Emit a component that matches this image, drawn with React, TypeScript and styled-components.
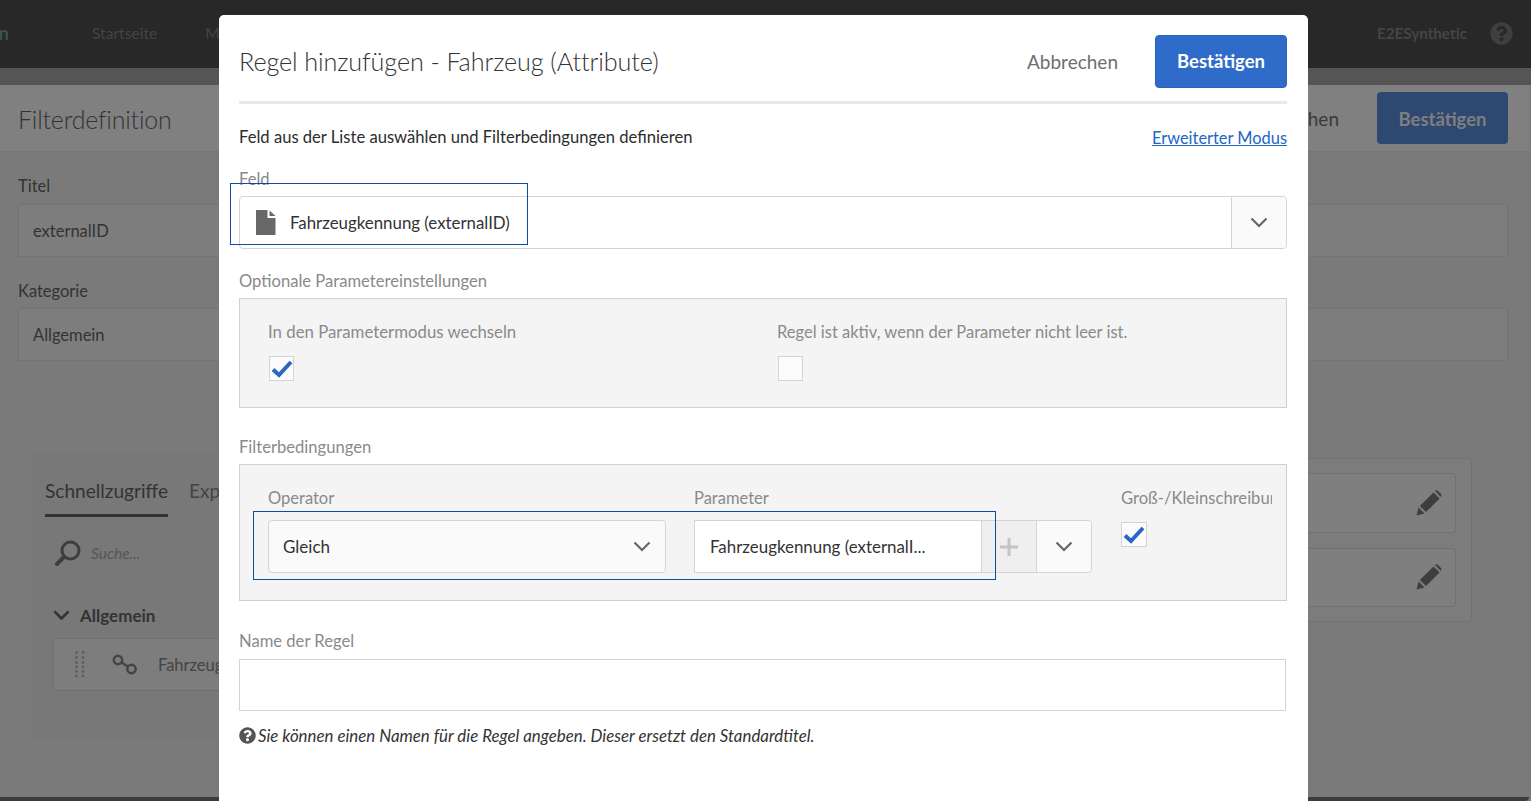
import React from "react";
import styled, { createGlobalStyle } from "styled-components";
import { FaQuestionCircle } from "react-icons/fa";

const Global = createGlobalStyle`
  html, body { margin: 0; padding: 0; height: 801px; overflow: hidden; background: #7a7a7a; }
  body { font-family: Lato, "Open Sans", sans-serif; font-size: 17px; color: #2c2c2c; }
  * { box-sizing: border-box; }
`;

const Page = styled.div`
  position: relative; height: 801px; overflow: hidden; display: flex; flex-direction: column; background: #7a7a7a;
`;
const TopBar = styled.header`
  height: 68px; background: #282828; display: flex; align-items: center; color: #444; padding-right: 18px; flex: none; padding-bottom: 2px;
`;
const Brand = styled.div`
  width: 9px; overflow: hidden; display: flex; justify-content: flex-end; font-weight: 700; color: #3a544c; font-size: 18px;
`;
const NavLink = styled.span`
  font-size: 15.6px; color: #444; margin-right: 48px; &:first-of-type { margin-left: 83px; }
`;
const Spacer = styled.div`flex: 1;`;
const UserName = styled.span`font-weight: 700; font-size: 15.2px; color: #454545; margin-right: 23px;`;
const Band = styled.div`height: 17px; background: #555; flex: none;`;
const Sheet = styled.main`
  flex: 1; margin-right: 2px; border-radius: 0 4px 4px 0; background: #7a7a7a; display: flex; flex-direction: column; min-height: 0;
  border-bottom: 4px solid #3c3c3c;
`;
const SheetHeader = styled.div`
  height: 67px; background: #808080; border-bottom: 1px solid #767676; display: flex; align-items: center; padding: 0 21px 0 18px; flex: none;
`;
const SheetTitle = styled.h1`margin: 0; padding-top: 1px; font-weight: 300; font-size: 25px; color: #333; letter-spacing: -.2px;`;
const SheetCancel = styled.span`font-size: 19px; color: #3a3a3a; margin-right: 38px;`;
const SheetConfirm = styled.div`
  width: 131px; height: 52px; padding-top: 1px; background: #2d4871; border-radius: 4px; color: #7f7f7f; font-weight: 700; font-size: 18.5px;
  display: flex; align-items: center; justify-content: center;
`;
const SheetForm = styled.div`padding: 22px 21px 0 18px; display: flex; flex-direction: column;`;
const SheetLabel = styled.div<{ $shift?: number }>`
  font-size: 16.5px; color: #333; height: 24px; line-height: 24px;
  margin: ${(p) => p.$shift ?? 0}px 0 ${(p) => -(p.$shift ?? 0)}px;
`;
const SheetField = styled.div`
  height: 53px; margin: 6px 0 21px; border: 1px solid #737373; background: #7d7d7d; display: flex; align-items: center; padding-left: 14px; color: #333; font-size: 16.5px;
`;
const Lower = styled.div`
  display: flex; align-items: flex-start; gap: 40px; padding: 22px 57px 0 14px; border-top: 1px solid #767676; margin: 48px 0 0 18px;
`;
const Palette = styled.section`
  width: 620px; height: 288px; background: #787878; padding: 0 13px;
`;
const Tabs = styled.div`display: flex; gap: 21px; height: 65px; padding-top: 23px; font-size: 19.1px; color: #333;`;
const Tab = styled.div<{ $active?: boolean }>`
  height: 41px; line-height: 30px; ${(p) => p.$active ? "border-bottom: 3px solid #333;" : "color: #444;"}
`;
const SearchRow = styled.div`
  display: flex; align-items: center; gap: 10px; height: 70px; margin: 0 -13px; padding-left: 23px; border-bottom: 1px solid #757575; color: #555; font-style: italic; font-size: 15.5px;
`;
const GroupHead = styled.div`display: flex; align-items: center; gap: 10px; margin: 13px 0 9px 8px; font-weight: 700; font-size: 17px; color: #333; height: 28px;`;
const PaletteItem = styled.div`
  margin-left: 8px; height: 53px; border: 1px solid #6f6f6f; border-radius: 4px; display: flex; align-items: center; padding-left: 21px; gap: 27px; background: #7d7d7d; color: #444; font-size: 16.5px;
`;
const PaletteItemName = styled.span`margin-left: -7px;`;
const Results = styled.section`
  flex: 1; height: 164px; margin-top: 5px; border: 1px solid #727272; border-radius: 4px; background: #7c7c7c; padding: 14px 15px 14px 20px; display: flex; flex-direction: column; gap: 15px;
`;
const ResultCard = styled.div`
  height: 60px; border: 1px solid #707070; border-radius: 4px; display: flex; align-items: center; justify-content: flex-end; padding-right: 13px; background: #7f7f7f;
`;

const Dialog = styled.div`
  position: absolute; left: 219px; top: 15px; width: 1089px; height: 800px; background: #fff; border-radius: 5px; padding: 20px 21px 0 20px;
`;
const DialogHeader = styled.div`
  display: flex; align-items: center; height: 69px; padding: 1px 0 15px; border-bottom: 3px solid #e8e8e8;
`;
const DialogTitle = styled.h2`margin: 0; font-weight: 300; font-size: 25.2px; color: #333; flex: 1; letter-spacing: -.1px;`;
const CancelButton = styled.span`font-size: 19px; color: #6e6e6e; margin-right: 37px;`;
const ConfirmButton = styled.div`
  width: 132px; height: 53px; background: #2f6bc9; border: 1px solid #2a62b8; border-radius: 4px; color: #fff; font-weight: 700; font-size: 18.5px;
  display: flex; align-items: center; justify-content: center;
`;
const IntroRow = styled.div`display: flex; justify-content: space-between; align-items: center; height: 24px; margin: 21px 0 19px; font-size: 16.6px; color: #2c2c2c;`;
const AdvancedLink = styled.a`color: #2166c5; text-decoration: underline; font-size: 16.4px;`;
const SectionLabel = styled.div`font-size: 16.6px; color: #8a8a8a; height: 22px; line-height: 22px;`;
const FieldPicker = styled.div`
  height: 53px; border: 1.5px solid #d4d4d4; border-radius: 4px; display: flex; align-items: center; overflow: hidden; margin-top: 6px; margin-bottom: 21px; background: #fff;
`;
const FieldValue = styled.div`flex: 1; display: flex; align-items: center; gap: 14px; padding-left: 16px; font-size: 16.85px; color: #333;`;
const ArrowCell = styled.div<{ $w: number }>`
  width: ${(p) => p.$w}px; align-self: stretch; background: #fafafa; border-left: 1.5px solid #d4d4d4; display: flex; align-items: center; justify-content: center; flex: none;
`;
const OptionsBox = styled.div`
  height: 110px; margin-top: 6px; background: #f4f4f4; border: 1.5px solid #d0d0d0; padding: 22px 0 0 28px; display: grid; grid-template-columns: 509px 1fr; margin-bottom: 28px;
`;
const OptionCol = styled.div`display: flex; flex-direction: column; align-items: flex-start; color: #8a8a8a;`;
const OptionLabel = styled.div<{ $fs: number }>`height: 22px; line-height: 22px; margin-bottom: 13px; font-size: ${(p) => p.$fs}px;`;
const Check = styled.div<{ $size?: number; $ml?: number }>`
  width: ${(p) => p.$size ?? 25}px; height: 25px; border: 1.5px solid #d4d4d4; background: #fbfbfb; display: flex; align-items: center; justify-content: center; margin-left: ${(p) => p.$ml ?? 1}px; flex: none;
`;
const ConditionBox = styled.div`
  height: 137px; margin-top: 6px; background: #f4f4f4; border: 1.5px solid #d0d0d0; padding: 22px 14px 0 28px; display: flex; margin-bottom: 29px;
`;
const OpCol = styled.div`width: 398px; flex: none; margin-right: 28px;`;
const ParamCol = styled.div`width: 398px; flex: none; margin-right: 29px;`;
const SmallLabel = styled.div`height: 22px; line-height: 22px; font-size: 16.5px; color: #8a8a8a; margin-bottom: 11px;`;
const OperatorSelect = styled.div`
  height: 53px; background: #fafafa; border: 1.5px solid #d4d4d4; border-radius: 4px; display: flex; align-items: center; justify-content: space-between; padding: 0 14px 0 14px; color: #333; font-size: 17px;
`;
const ParamGroup = styled.div`height: 53px; display: flex; border: 1.5px solid #d4d4d4; border-radius: 0 4px 4px 0; overflow: hidden;`;
const ParamInput = styled.div`
  width: 287px; flex: none; background: #fff; border-right: 1.5px solid #d4d4d4; display: flex; align-items: center; padding-left: 15px; color: #333; font-size: 16.9px; white-space: nowrap;
`;
const PlusCell = styled.div`width: 54px; background: #efefef; display: flex; align-items: center; justify-content: center; flex: none;`;
const CaseCol = styled.div`flex: 1; min-width: 0; overflow: hidden; font-size: 16.6px; color: #8a8a8a; white-space: nowrap;`;
const CaseLabel = styled.div`height: 22px; line-height: 22px; margin: 0 0 13px;`;
const NameInput = styled.div`height: 52px; width: 1047px; border: 1.5px solid #d4d4d4; margin-top: 7px; background: #fff;`;
const HelpRow = styled.div`display: flex; align-items: center; gap: 2px; margin-top: 13px; font-style: italic; font-size: 16.85px; color: #333; height: 22px;`;
const Marker = styled.div<{ $l: number; $t: number; $w: number; $h: number }>`
  position: absolute; left: ${(p) => p.$l}px; top: ${(p) => p.$t}px; width: ${(p) => p.$w}px; height: ${(p) => p.$h}px; border: 1px solid #0a4ba6; pointer-events: none;
`;

const Chevron = ({ size = 18, color = "#666", sw = 2.2 }: { size?: number; color?: string; sw?: number }) => (
  <svg width={size} height={size * 0.6} viewBox="0 0 18 10.8" fill="none"><path d="M1.5 1.5 L9 9 L16.5 1.5" stroke={color} strokeWidth={sw} /></svg>
);
const Tick = () => (
  <svg width="22" height="18" viewBox="0 0 22 18" fill="none"><path d="M2 9.5 L8 15 L20 2" stroke="#2b66c4" strokeWidth="4" /></svg>
);
const Pencil = () => (
  <svg width="26" height="26" viewBox="0 0 26 26" fill="#3e3e3e"><path d="M0.5 25.5 L2.5 17.5 L8.5 23.5 Z" /><path d="M3.8 16 L17.5 2.4 L23.6 8.5 L10 22.1 Z" /><path d="M19 1 L21 0 L25.5 4.5 L24.8 7 Z" /></svg>
);
const FileIcon = () => (
  <svg width="20" height="25" viewBox="0 0 20 25" fill="#686868"><path d="M0 0 H11.5 V8 H19.5 V25 H0 Z" /><path d="M13.5 0.5 L19.5 6 H13.5 Z" /></svg>
);
const SearchIcon = () => (
  <svg width="26" height="26" viewBox="0 0 26 26" fill="none" stroke="#3e3e3e"><circle cx="15.5" cy="10.5" r="8.5" strokeWidth="3" /><path d="M9 17 L2 24" strokeWidth="4" strokeLinecap="round" /></svg>
);
const GripIcon = () => (
  <svg width="10" height="27" viewBox="0 0 10 27" fill="#5f5f5f">
    {[1.5, 6.5, 11.5, 16, 20.5, 25].flatMap((y) => [1.5, 8].map((x) => <circle key={`${x}-${y}`} cx={x} cy={y} r="1.4" />))}
  </svg>
);
const LinkIcon = () => (
  <svg width="26" height="22" viewBox="0 0 26 22" fill="none" stroke="#444" strokeWidth="2.4"><circle cx="6" cy="6" r="4.2" /><circle cx="19.5" cy="15" r="4.2" /><path d="M9.5 8.5 L16 12.5" /></svg>
);

export default function App() {
  return (
    <Page>
      <Global />
      <TopBar>
        <Brand><span>Campaign</span></Brand>
        <NavLink>Startseite</NavLink>
        <NavLink>Marketing</NavLink>
        <Spacer />
        <UserName>E2ESynthetic</UserName>
        <FaQuestionCircle size={23} color="#3f3f3f" />
      </TopBar>
      <Band />
      <Sheet>
        <SheetHeader>
          <SheetTitle>Filterdefinition</SheetTitle>
          <Spacer />
          <SheetCancel>Abbrechen</SheetCancel>
          <SheetConfirm>Bestätigen</SheetConfirm>
        </SheetHeader>
        <SheetForm>
          <SheetLabel>Titel</SheetLabel>
          <SheetField>externalID</SheetField>
          <SheetLabel $shift={1}>Kategorie</SheetLabel>
          <SheetField>Allgemein</SheetField>
        </SheetForm>
        <Lower>
          <Palette>
            <Tabs>
              <Tab $active>Schnellzugriffe</Tab>
              <Tab>Experte</Tab>
            </Tabs>
            <SearchRow><SearchIcon /><span>Suche...</span></SearchRow>
            <GroupHead><Chevron size={17} color="#333" sw={2.8} />Allgemein</GroupHead>
            <PaletteItem><GripIcon /><LinkIcon /><PaletteItemName>Fahrzeugkennung</PaletteItemName></PaletteItem>
          </Palette>
          <Results>
            <ResultCard><Pencil /></ResultCard>
            <ResultCard><Pencil /></ResultCard>
          </Results>
        </Lower>
      </Sheet>

      <Dialog>
        <DialogHeader>
          <DialogTitle>Regel hinzufügen - Fahrzeug (Attribute)</DialogTitle>
          <CancelButton>Abbrechen</CancelButton>
          <ConfirmButton>Bestätigen</ConfirmButton>
        </DialogHeader>
        <IntroRow>
          <span>Feld aus der Liste auswählen und Filterbedingungen definieren</span>
          <AdvancedLink>Erweiterter Modus</AdvancedLink>
        </IntroRow>
        <SectionLabel>Feld</SectionLabel>
        <FieldPicker>
          <FieldValue><FileIcon />Fahrzeugkennung (externalID)</FieldValue>
          <ArrowCell $w={55}><Chevron /></ArrowCell>
        </FieldPicker>
        <SectionLabel>Optionale Parametereinstellungen</SectionLabel>
        <OptionsBox>
          <OptionCol>
            <OptionLabel $fs={16.8}>In den Parametermodus wechseln</OptionLabel>
            <Check><Tick /></Check>
          </OptionCol>
          <OptionCol>
            <OptionLabel $fs={16.5}>Regel ist aktiv, wenn der Parameter nicht leer ist.</OptionLabel>
            <Check />
          </OptionCol>
        </OptionsBox>
        <SectionLabel>Filterbedingungen</SectionLabel>
        <ConditionBox>
          <OpCol>
            <SmallLabel>Operator</SmallLabel>
            <OperatorSelect>Gleich<Chevron /></OperatorSelect>
          </OpCol>
          <ParamCol>
            <SmallLabel>Parameter</SmallLabel>
            <ParamGroup>
              <ParamInput>Fahrzeugkennung (externalI...</ParamInput>
              <PlusCell>
                <svg width="18" height="18" viewBox="0 0 18 18" fill="#c4c4c4"><path d="M7.5 0 H10.5 V7.5 H18 V10.5 H10.5 V18 H7.5 V10.5 H0 V7.5 H7.5 Z" /></svg>
              </PlusCell>
              <ArrowCell $w={55}><Chevron /></ArrowCell>
            </ParamGroup>
          </ParamCol>
          <CaseCol>
            <CaseLabel>Groß-/Kleinschreibung</CaseLabel>
            <Check $size={26} $ml={0}><Tick /></Check>
          </CaseCol>
        </ConditionBox>
        <SectionLabel>Name der Regel</SectionLabel>
        <NameInput />
        <HelpRow><FaQuestionCircle size={17} color="#555" /><span>Sie können einen Namen für die Regel angeben. Dieser ersetzt den Standardtitel.</span></HelpRow>
      </Dialog>

      <Marker $l={230} $t={183} $w={298} $h={62} />
      <Marker $l={253} $t={511} $w={743} $h={69} />
    </Page>
  );
}
